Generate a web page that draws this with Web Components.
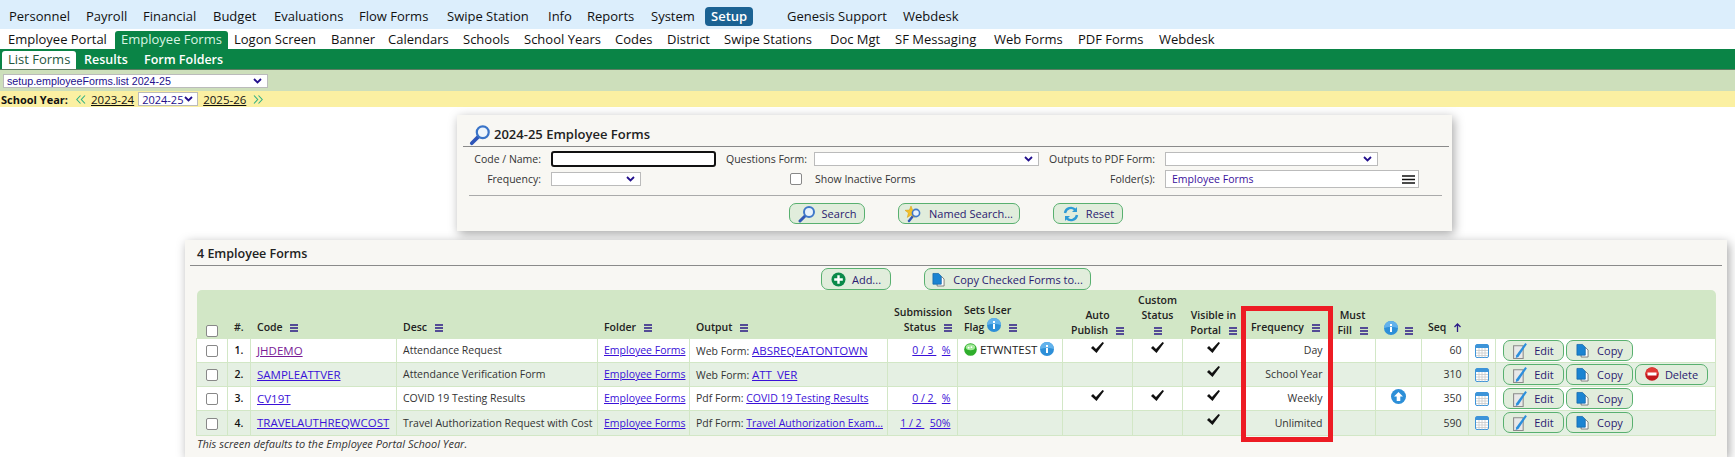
<!DOCTYPE html>
<html>
<head>
<meta charset="utf-8">
<title>Employee Forms</title>
<style>
  html, body { margin: 0; background: #fff; }
  body { font-family: "Open Sans", "Liberation Sans", sans-serif; font-size: 11px; color: #222; overflow: hidden; }
</style>
</head>
<body>
<gn-menu variant="top" stops="9,86,143,213,274,359,447,548,587,651,711,787,903" items="Personnel,Payroll,Financial,Budget,Evaluations,Flow Forms,Swipe Station,Info,Reports,System,*Setup,Genesis Support,Webdesk"></gn-menu>
<gn-menu variant="second" stops="8,121,234,331,388,463,524,615,667,724,830,895,994,1078,1159" items="Employee Portal,*Employee Forms,Logon Screen,Banner,Calendars,Schools,School Years,Codes,District,Swipe Stations,Doc Mgt,SF Messaging,Web Forms,PDF Forms,Webdesk"></gn-menu>
<gn-menu variant="third" stops="8,84,144" items="*List Forms,Results,Form Folders"></gn-menu>
<gn-pagebar></gn-pagebar>
<gn-yearbar></gn-yearbar>
<gn-search-panel></gn-search-panel>
<gn-forms-panel></gn-forms-panel>

<script>
const ICONS = {
  search: `<svg width="18" height="18" viewBox="0 0 18 18"><path d="M7.5 10.5 2 16" stroke="#3157b5" stroke-width="3" stroke-linecap="round"/><circle cx="11" cy="7" r="5" fill="#e8f2fc" stroke="#3f78c9" stroke-width="2"/></svg>`,
  bigsearch: `<svg width="22" height="22" viewBox="0 0 24 24"><path d="M10 14 3 21" stroke="#2f55b8" stroke-width="4" stroke-linecap="round"/><circle cx="15" cy="9" r="6.5" fill="#eef5fc" stroke="#3a74c8" stroke-width="2.4"/></svg>`,
  named: `<svg width="18" height="18" viewBox="0 0 18 18"><path d="M8 11 4 16" stroke="#3157b5" stroke-width="2.4" stroke-linecap="round"/><path d="M6 1 7.6 5 12 5.3 8.6 8 9.7 12.4 6 10 2.3 12.4 3.4 8 0 5.3 4.4 5Z" fill="#f2c029" stroke="#d49b12" stroke-width=".5"/><circle cx="11" cy="8" r="3.6" fill="#e8f2fc" stroke="#3f78c9" stroke-width="1.6"/></svg>`,
  reset: `<svg width="18" height="18" viewBox="0 0 18 18" fill="none"><path d="M3 8a6 6 0 0 1 10.5-3" stroke="#2e9bd6" stroke-width="2.4"/><path d="M15 2v5h-5z" fill="#2e9bd6"/><path d="M15 10a6 6 0 0 1-10.5 3" stroke="#2e9bd6" stroke-width="2.4"/><path d="M3 16v-5h5z" fill="#2e9bd6"/></svg>`,
  add: `<svg width="15" height="15" viewBox="0 0 15 15"><circle cx="7.5" cy="7.5" r="7" fill="#0b8a4a"/><path d="M7.5 3.2v8.6M3.2 7.5h8.6" stroke="#fff" stroke-width="2.4"/></svg>`,
  copy: `<svg width="13" height="15" viewBox="0 0 14 15"><path d="M5.5 4.5h5l2.5 2.5v7.5H5.5z" fill="#fff" stroke="#777"/><path d="M1 1h6l3 3v8.5H1z" fill="#1b84d2" stroke="#1466a8" stroke-width=".8"/></svg>`,
  edit: `<svg width="15" height="17" viewBox="0 0 14 16"><path d="M.5 3.5h9v12h-9z" fill="#e8e8e8" stroke="#8a8a8a"/><path d="M3 12.5 11.5 1 13 2 5 14l-2.5 1z" fill="#2b8fdc"/></svg>`,
  del: `<svg width="14" height="14" viewBox="0 0 14 14"><circle cx="7" cy="7" r="6.8" fill="#c4171c"/><path d="M.5 7a6.5 6.5 0 0 1 13 0z" fill="#e23a36"/><rect x="2.5" y="5.5" width="9" height="3" fill="#fff"/></svg>`,
  info: `<svg width="14" height="14" viewBox="0 0 14 14"><circle cx="7" cy="7" r="7" fill="#2d8fd8"/><path d="M0 7a7 7 0 0 1 14 0c-3-1.5-11-1.5-14 0z" fill="#62b2ec"/><rect x="6" y="6" width="2" height="5" fill="#fff"/><rect x="6" y="3" width="2" height="2" fill="#fff"/></svg>`,
  up: `<svg width="15" height="15" viewBox="0 0 15 15"><circle cx="7.5" cy="7.5" r="7.5" fill="#2d8fd8"/><path d="M7.5 3 12 7.5H9.3V12H5.7V7.5H3z" fill="#fff"/></svg>`,
  flag: `<svg width="13" height="13" viewBox="0 0 14 14"><circle cx="7" cy="7" r="6.8" fill="#2fae2c"/><ellipse cx="7" cy="4.6" rx="5" ry="3.3" fill="#a5ea9c"/><circle cx="5" cy="5" r="1" fill="#fff"/><circle cx="8" cy="4.5" r=".9" fill="#fff"/></svg>`,
  cal: `<svg width="14" height="14" viewBox="0 0 14 14"><rect x=".5" y=".5" width="13" height="13" rx="1.5" fill="#fff" stroke="#3d94d9"/><rect x="1" y="1" width="12" height="3" fill="#3d94d9"/><path d="M1 6.5h12M1 9h12M1 11.5h12M4 4v9.5M7 4v9.5M10 4v9.5" stroke="#c9c9c9" stroke-width=".8"/></svg>`,
  check: `<svg class="chk" width="13" height="11" viewBox="0 0 13 11"><path d="M0 6 2 4 5 7 11.5 0 13 1 5.5 11Z" fill="#111"/></svg>`,
  sort: `<svg width="8" height="8" viewBox="0 0 8 8"><path d="M0 1h8M0 4h8M0 7h8" stroke="#2b1a87" stroke-width="1.3"/></svg>`,
  sortblack: `<svg width="13" height="9" viewBox="0 0 13 9"><path d="M0 1h13M0 4.5h13M0 8h13" stroke="#111" stroke-width="1.5"/></svg>`,
  seq: `<svg width="7" height="9" viewBox="0 0 7 9" fill="none"><path d="M3.5 9V1M.5 4l3-3 3 3" stroke="#2b1a87" stroke-width="1.3"/></svg>`,
  dblleft: `<svg width="10" height="9" viewBox="0 0 10 9" fill="none"><path d="M4.5.5.8 4.5l3.7 4M9 .5 5.3 4.5 9 8.5" stroke="#2fb083" stroke-width="1.1"/></svg>`,
  dblright: `<svg width="10" height="9" viewBox="0 0 10 9" fill="none"><path d="M1 .5l3.7 4-3.7 4M5.5 .5l3.7 4-3.7 4" stroke="#2fb083" stroke-width="1.1"/></svg>`,
  caret: `<svg width="9" height="6" viewBox="0 0 9 6" fill="none"><path d="M1 1l3.500 3.500L8 1" stroke="#23108c" stroke-width="1.8"/></svg>`
};

// tabs are comma separated, * = selected. stops = x where each label starts
class GnMenu extends HTMLElement {
  connectedCallback() {
    const items = this.getAttribute('items').split(',');
    const stops = this.getAttribute('stops').split(',').map(Number);
    const cells = items.map((item, i) => {
      const w = i < items.length - 1 ? `width:${stops[i + 1] - stops[i]}px` : '';
      return `<div class="cell" style="${w}"><span class="${item[0] === '*' ? 'sel' : ''}">${item.replace('*', '')}</span></div>`;
    }).join('');
    this.attachShadow({ mode: 'open' }).innerHTML = `
      <style>
        :host { display: flex; align-items: flex-end; font: 13px "Open Sans", "Liberation Sans", sans-serif; color: #111; box-sizing: border-box; padding-left: ${stops[0] - 6}px; }
        :host([variant=top]) { height: 29px; background: #dceefc; padding-top: 7px; align-items: flex-start; }
        :host([variant=second]) { height: 20px; background: #fff; }
        :host([variant=third]) { height: 21px; background: #0a8446; color: #fff; font-size: 12.5px; font-weight: 600; border-bottom: 1px solid #5e7c62; }
        .cell { flex: none; }
        span { display: inline-block; padding: 0 6px; height: 18px; line-height: 17px; white-space: nowrap; vertical-align: top; }
        :host([variant=top]) span { line-height: 19px; }
        :host([variant=top]) span.sel { background: #1b6293; color: #fff; font-weight: 600; border-radius: 4px; height: 19px; }
        :host([variant=second]) span.sel { background: #0a8446; color: #d9f5e4; border-radius: 3px 3px 0 0; }
        :host([variant=third]) span.sel { background: #fff; color: #24563d; font-size: 13px; font-weight: 400; border-radius: 3px 3px 0 0; }
      </style>
      ${cells}`;
  }
}
customElements.define('gn-menu', GnMenu);

class GnSelect extends HTMLElement {
  connectedCallback() {
    this.attachShadow({ mode: 'open' }).innerHTML = `
      <style>
        :host { display: inline-flex; align-items: center; box-sizing: border-box; background: #fff; border: 1px solid #bbb; height: 14px; padding: 0 5px 0 3px; color: #23108c; font: 10.7px "Liberation Sans", sans-serif; white-space: nowrap; }
        svg { margin-left: auto; flex: none; }
      </style>
      <slot></slot>${ICONS.caret}`;
  }
}
customElements.define('gn-select', GnSelect);

class GnPagebar extends HTMLElement {
  connectedCallback() {
    this.attachShadow({ mode: 'open' }).innerHTML = `
      <style>
        :host { display: flex; align-items: flex-start; height: 21px; background: #cddfbb; padding: 4px 0 0 3px; box-sizing: border-box; }
        gn-select { width: 265px; }
      </style>
      <gn-select>setup.employeeForms.list 2024-25</gn-select>`;
  }
}
customElements.define('gn-pagebar', GnPagebar);

class GnYearbar extends HTMLElement {
  connectedCallback() {
    this.attachShadow({ mode: 'open' }).innerHTML = `
      <style>
        :host { display: flex; align-items: center; height: 16px; background: #fbf0a2; padding-left: 1px; font: 11.5px "Open Sans", sans-serif; color: #111; }
        b { font-weight: 700; font-size: 11px; width: 75px; flex: none; white-space: nowrap; }
        a { color: #111; text-decoration: underline; }
        svg { margin-right: 5px; flex: none; }
        gn-select { width: 60px; margin: 0 5px 0 4px; padding: 0 4px 0 3px; font: 11px "Open Sans", sans-serif; }
        .sp { width: 7px; }
      </style>
      <b>School Year:</b>${ICONS.dblleft}<a>2023-24</a><gn-select>2024-25</gn-select><a>2025-26</a><span class="sp"></span>${ICONS.dblright}`;
  }
}
customElements.define('gn-yearbar', GnYearbar);

class GnButton extends HTMLElement {
  connectedCallback() {
    this.attachShadow({ mode: 'open' }).innerHTML = `
      <style>
        :host { display: inline-flex; align-items: center; justify-content: center; gap: 6px; box-sizing: border-box; height: 21px; background: #e1eddc; border: 1px solid #58b06f; border-radius: 7px; color: #2b1a70; font-size: 11px; white-space: nowrap; }
      </style>
      ${ICONS[this.getAttribute('icon')]}<slot></slot>`;
  }
}
customElements.define('gn-button', GnButton);

class GnPanel extends HTMLElement {
  connectedCallback() {
    this.attachShadow({ mode: 'open' }).innerHTML = `
      <style>
        :host { display: block; box-sizing: border-box; background: #f8f7f3; box-shadow: 2px 3px 10px rgba(0,0,0,.35); }
        .title { display: flex; align-items: flex-end; gap: 3px; margin: var(--title-margin, 0 5px); height: var(--title-h, 31px); border-bottom: 1px solid #8a8a8a; font-size: var(--title-size, 12.5px); font-weight: 600; color: #222; padding: 0 0 3px var(--title-pad, 7px); box-sizing: border-box; }
        ::slotted([slot=icon]) { display: block; height: 21px; margin-bottom: -2px; }
      </style>
      <div class="title"><slot name="icon"></slot><slot name="title"></slot></div>
      <slot></slot>`;
  }
}
customElements.define('gn-panel', GnPanel);

class GnSearchPanel extends HTMLElement {
  connectedCallback() {
    this.attachShadow({ mode: 'open' }).innerHTML = `
      <style>
        :host { display: block; margin: 8px 0 0 457px; width: 995px; height: 116px; font-size: 10.5px; color: #333; }
        gn-panel { height: 116px; --title-h: 32px; --title-size: 13px; --title-margin: 0 3px 0 6px; --title-pad: 6px; }
        .grid { display: grid; grid-template-columns: 78px 165px 78px 225px 106px 254px; column-gap: 10px; row-gap: 3px; align-items: center; padding: 4px 0 0 6px; }
        label { text-align: right; white-space: nowrap; }
        .code { border: 2px solid #111; border-radius: 3px; background: #fff; box-sizing: border-box; height: 16px; }
        .show { display: flex; align-items: center; gap: 13px; grid-column: 3 / 5; padding-left: 64px; white-space: nowrap; }
        .box { width: 10px; height: 10px; border: 1px solid #888; border-radius: 2px; background: #fff; display: block; }
        .folder { display: flex; align-items: center; justify-content: space-between; box-sizing: border-box; height: 18px; border: 1px solid #bbb; background: #fff; padding: 0 3px 0 6px; color: #3a109c; }
        .rule { margin: 7px 10px 0 12px; border-top: 1px solid #aaa; }
        .btns { display: flex; justify-content: center; gap: 33px; padding: 7px 0 0 3px; }
      </style>
      <gn-panel>
        <span slot="icon">${ICONS.bigsearch}</span>
        <span slot="title">2024-25 Employee Forms</span>
        <div class="grid">
          <label>Code / Name:</label><div class="code"></div>
          <label>Questions Form:</label><gn-select></gn-select>
          <label>Outputs to PDF Form:</label><gn-select style="width:213px"></gn-select>
          <label>Frequency:</label><gn-select style="width:90px"></gn-select>
          <div class="show"><span class="box"></span>Show Inactive Forms</div>
          <label>Folder(s):</label><div class="folder">Employee Forms ${ICONS.sortblack}</div>
        </div>
        <div class="rule"></div>
        <div class="btns">
          <gn-button icon="search" style="width:76px">Search</gn-button>
          <gn-button icon="named" style="width:122px">Named Search...</gn-button>
          <gn-button icon="reset" style="width:70px">Reset</gn-button>
        </div>
      </gn-panel>`;
  }
}
customElements.define('gn-search-panel', GnSearchPanel);

const COLS = [31, 23, 146, 201, 92, 198, 70, 105, 70, 50, 62, 85, 46, 46, 47, 27, 220];
const ROWS = [
  { n: 1, code: 'JHDEMO', visited: true, desc: 'Attendance Request', kind: 'Web Form: ', out: 'ABSREQEATONTOWN', caps: true, a: '0 / 3', p: '%', flag: true, auto: 1, custom: 1, freq: 'Day', seq: 60 },
  { n: 2, code: 'SAMPLEATTVER', desc: 'Attendance Verification Form', kind: 'Web Form: ', out: 'ATT_VER', caps: true, freq: 'School Year', seq: 310, del: true },
  { n: 3, code: 'CV19T', desc: 'COVID 19 Testing Results', kind: 'Pdf Form: ', out: 'COVID 19 Testing Results', a: '0 / 2', p: '%', auto: 1, custom: 1, freq: 'Weekly', up: true, seq: 350 },
  { n: 4, code: 'TRAVELAUTHREQWCOST', desc: 'Travel Authorization Request with Cost', kind: 'Pdf Form: ', out: 'Travel Authorization Exam...', a: '1 / 2', p: '50%', freq: 'Unlimited', seq: 590, tall: true }
];

class GnFormsTable extends HTMLElement {
  connectedCallback() {
    const s = ICONS.sort;
    const rows = ROWS.map(r => `
      <tr class="${r.tall ? 'tall' : ''}">
        <td class="c"><span class="box"></span></td>
        <td class="c num">${r.n}.</td>
        <td><a class="caps" style="${r.visited ? 'color:#7a1a96' : ''}">${r.code}</a></td>
        <td>${r.desc}</td>
        <td><a>Employee Forms</a></td>
        <td>${r.kind}<a class="${r.caps ? 'caps' : ''}">${r.out}</a></td>
        <td class="r">${r.a ? `<a>${r.a}&nbsp;</a>&nbsp;&nbsp;<a>${r.p}</a>` : ''}</td>
        <td>${r.flag ? `<span class="flag">${ICONS.flag}<span class="caps">ETWNTEST</span>${ICONS.info}</span>` : ''}</td>
        <td class="c">${r.auto ? ICONS.check : ''}</td>
        <td class="c">${r.custom ? ICONS.check : ''}</td>
        <td class="c">${ICONS.check}</td>
        <td class="r">${r.freq}</td>
        <td></td>
        <td class="c">${r.up ? ICONS.up : ''}</td>
        <td class="r">${r.seq}</td>
        <td class="c cal">${ICONS.cal}</td>
        <td class="acts"><gn-button icon="edit" style="width:61px">Edit</gn-button><gn-button icon="copy" style="width:67px;gap:8px">Copy</gn-button>${r.del ? `<gn-button icon="del" style="width:73px">Delete</gn-button>` : ''}</td>
      </tr>`).join('');
    this.attachShadow({ mode: 'open' }).innerHTML = `
      <style>
        :host { display: block; position: relative; width: 1519px; font-size: 10.5px; color: #333; }
        table { border-collapse: collapse; table-layout: fixed; width: 1519px; }
        thead th { background: #d2e7c6; height: 48px; padding: 0 0 3px 6.5px; vertical-align: bottom; text-align: left; font-weight: 600; color: #222; line-height: 15px; white-space: nowrap; box-sizing: border-box; }
        th:first-child { border-radius: 5px 0 0 0; } th:last-child { border-radius: 0 5px 0 0; }
        th.c { text-align: center; padding-left: 0; }
        th.rt { text-align: right; padding-right: 6px; }
        th svg { margin-left: 5px; vertical-align: -1px; }
        th svg.noi { margin-left: 0; }
        td { height: 24px; padding: 0 6px; border: 1px solid #d2e7c6; white-space: nowrap; overflow: hidden; box-sizing: border-box; background: #fff; }
        tbody tr:nth-child(even) td { background: #e5f0e3; }
        tr.tall td { height: 25px; }
        a { color: #3a10d8; text-decoration: underline; }
        .caps { font-size: 11.5px; }
        .c { text-align: center; padding: 0; }
        .r { text-align: right; padding-right: 6.5px; }
        .num { font-weight: 600; color: #111; }
        .box { display: inline-block; width: 10px; height: 10px; border: 1px solid #888; border-radius: 2px; background: #fff; vertical-align: middle; }
        .flag { display: inline-flex; align-items: center; gap: 3px; color: #222; }
        td.c svg { vertical-align: middle; margin-bottom: 3px; }
        td.c svg.chk { margin-bottom: 6px; }
        td.cal svg { margin-bottom: 0; }
        .acts { padding: 0 0 0 7px; }
        .acts gn-button { margin-right: 2px; vertical-align: middle; }
        .redbox { position: absolute; left: 1045px; top: 16px; width: 92px; height: 136px; box-sizing: border-box; border: 5px solid #ed1c24; pointer-events: none; }
      </style>
      <table>
        <colgroup>${COLS.map(w => `<col style="width:${w}px">`).join('')}</colgroup>
        <thead><tr>
          <th class="c"><span class="box"></span></th>
          <th>#.</th>
          <th>Code ${s}</th>
          <th>Desc ${s}</th>
          <th>Folder ${s}</th>
          <th>Output ${s}</th>
          <th class="rt">Submission<br>Status ${s}</th>
          <th>Sets User<br>Flag ${ICONS.info.replace('<svg', '<svg class="noi"')} ${s}</th>
          <th class="c">Auto<br>Publish ${s}</th>
          <th class="c">Custom<br>Status<br>${s.replace('<svg', '<svg class="noi"')}</th>
          <th class="c">Visible in<br>Portal ${s}</th>
          <th>Frequency ${s}</th>
          <th class="c">Must<br>Fill ${s}</th>
          <th class="c">${ICONS.info.replace('<svg', '<svg class="noi"')} ${s}</th>
          <th>Seq ${ICONS.seq}</th>
          <th></th>
          <th></th>
        </tr></thead>
        <tbody>${rows}</tbody>
      </table>
      <div class="redbox"></div>`;
  }
}
customElements.define('gn-forms-table', GnFormsTable);

class GnFormsPanel extends HTMLElement {
  connectedCallback() {
    this.attachShadow({ mode: 'open' }).innerHTML = `
      <style>
        :host { display: block; margin: 9px 0 0 185px; width: 1542px; height: 217px; }
        gn-panel { height: 217px; --title-h: 26px; }
        .acts { display: flex; justify-content: center; gap: 33px; height: 24px; padding-top: 2px; box-sizing: border-box; }
        .wrap { padding-left: 11px; }
        .note { font-style: italic; font-size: 11px; line-height: 15px; color: #333; padding-left: 1px; white-space: nowrap; }
        gn-button { height: 22px; }
      </style>
      <gn-panel>
        <span slot="title">4 Employee Forms</span>
        <div class="acts">
          <gn-button icon="add" style="width:70px">Add...</gn-button>
          <gn-button icon="copy" style="width:167px;gap:8px">Copy Checked Forms to...</gn-button>
        </div>
        <div class="wrap"><gn-forms-table></gn-forms-table>
        <div class="note">This screen defaults to the Employee Portal School Year.</div></div>
      </gn-panel>`;
  }
}
customElements.define('gn-forms-panel', GnFormsPanel);
</script>
</body>
</html>
